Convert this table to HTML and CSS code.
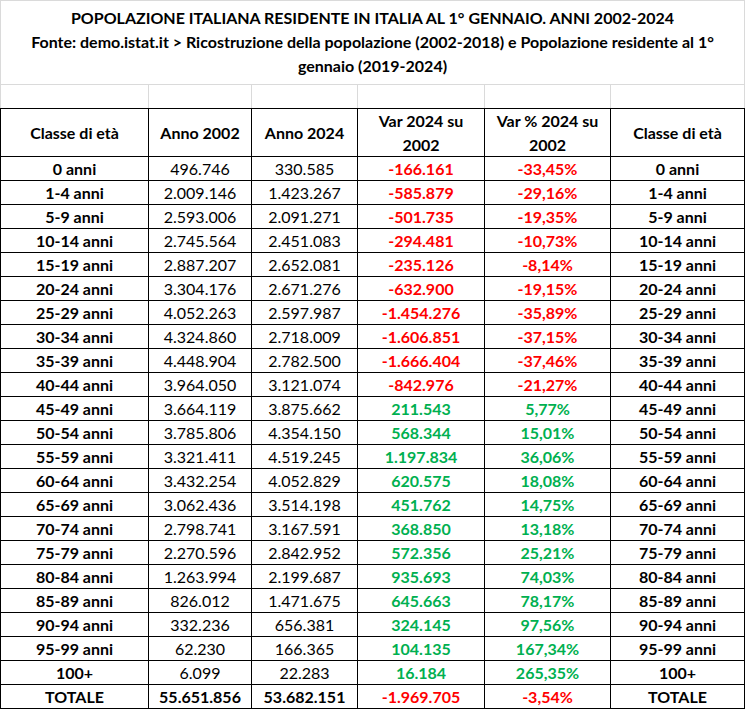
FILE: index.html
```html
<!DOCTYPE html>
<html lang="it">
<head>
<meta charset="utf-8">
<title>Popolazione italiana residente</title>
<link rel="stylesheet" href="styles.css">
</head>
<body>
<div class="sheet">
  <div class="title">
    <div class="tline">POPOLAZIONE ITALIANA RESIDENTE IN ITALIA AL 1° GENNAIO. ANNI 2002-2024</div>
    <div class="tline">Fonte: demo.istat.it &gt; Ricostruzione della popolazione (2002-2018) e Popolazione residente al 1°</div>
    <div class="tline">gennaio (2019-2024)</div>
  </div>
  <div class="spacer">
    <div></div><div></div><div></div><div></div><div></div><div></div>
  </div>
  <div class="grid">
    <div class="c hd">Classe di età</div>
    <div class="c hd">Anno 2002</div>
    <div class="c hd">Anno 2024</div>
    <div class="c hd">Var 2024 su<br>2002</div>
    <div class="c hd">Var % 2024 su<br>2002</div>
    <div class="c hd">Classe di età</div>

    <div class="c b">0 anni</div><div class="c">496.746</div><div class="c">330.585</div><div class="c b neg">-166.161</div><div class="c b neg">-33,45%</div><div class="c b">0 anni</div>
    <div class="c b">1-4 anni</div><div class="c">2.009.146</div><div class="c">1.423.267</div><div class="c b neg">-585.879</div><div class="c b neg">-29,16%</div><div class="c b">1-4 anni</div>
    <div class="c b">5-9 anni</div><div class="c">2.593.006</div><div class="c">2.091.271</div><div class="c b neg">-501.735</div><div class="c b neg">-19,35%</div><div class="c b">5-9 anni</div>
    <div class="c b">10-14 anni</div><div class="c">2.745.564</div><div class="c">2.451.083</div><div class="c b neg">-294.481</div><div class="c b neg">-10,73%</div><div class="c b">10-14 anni</div>
    <div class="c b">15-19 anni</div><div class="c">2.887.207</div><div class="c">2.652.081</div><div class="c b neg">-235.126</div><div class="c b neg">-8,14%</div><div class="c b">15-19 anni</div>
    <div class="c b">20-24 anni</div><div class="c">3.304.176</div><div class="c">2.671.276</div><div class="c b neg">-632.900</div><div class="c b neg">-19,15%</div><div class="c b">20-24 anni</div>
    <div class="c b">25-29 anni</div><div class="c">4.052.263</div><div class="c">2.597.987</div><div class="c b neg">-1.454.276</div><div class="c b neg">-35,89%</div><div class="c b">25-29 anni</div>
    <div class="c b">30-34 anni</div><div class="c">4.324.860</div><div class="c">2.718.009</div><div class="c b neg">-1.606.851</div><div class="c b neg">-37,15%</div><div class="c b">30-34 anni</div>
    <div class="c b">35-39 anni</div><div class="c">4.448.904</div><div class="c">2.782.500</div><div class="c b neg">-1.666.404</div><div class="c b neg">-37,46%</div><div class="c b">35-39 anni</div>
    <div class="c b">40-44 anni</div><div class="c">3.964.050</div><div class="c">3.121.074</div><div class="c b neg">-842.976</div><div class="c b neg">-21,27%</div><div class="c b">40-44 anni</div>
    <div class="c b">45-49 anni</div><div class="c">3.664.119</div><div class="c">3.875.662</div><div class="c b pos">211.543</div><div class="c b pos">5,77%</div><div class="c b">45-49 anni</div>
    <div class="c b">50-54 anni</div><div class="c">3.785.806</div><div class="c">4.354.150</div><div class="c b pos">568.344</div><div class="c b pos">15,01%</div><div class="c b">50-54 anni</div>
    <div class="c b">55-59 anni</div><div class="c">3.321.411</div><div class="c">4.519.245</div><div class="c b pos">1.197.834</div><div class="c b pos">36,06%</div><div class="c b">55-59 anni</div>
    <div class="c b">60-64 anni</div><div class="c">3.432.254</div><div class="c">4.052.829</div><div class="c b pos">620.575</div><div class="c b pos">18,08%</div><div class="c b">60-64 anni</div>
    <div class="c b">65-69 anni</div><div class="c">3.062.436</div><div class="c">3.514.198</div><div class="c b pos">451.762</div><div class="c b pos">14,75%</div><div class="c b">65-69 anni</div>
    <div class="c b">70-74 anni</div><div class="c">2.798.741</div><div class="c">3.167.591</div><div class="c b pos">368.850</div><div class="c b pos">13,18%</div><div class="c b">70-74 anni</div>
    <div class="c b">75-79 anni</div><div class="c">2.270.596</div><div class="c">2.842.952</div><div class="c b pos">572.356</div><div class="c b pos">25,21%</div><div class="c b">75-79 anni</div>
    <div class="c b">80-84 anni</div><div class="c">1.263.994</div><div class="c">2.199.687</div><div class="c b pos">935.693</div><div class="c b pos">74,03%</div><div class="c b">80-84 anni</div>
    <div class="c b">85-89 anni</div><div class="c">826.012</div><div class="c">1.471.675</div><div class="c b pos">645.663</div><div class="c b pos">78,17%</div><div class="c b">85-89 anni</div>
    <div class="c b">90-94 anni</div><div class="c">332.236</div><div class="c">656.381</div><div class="c b pos">324.145</div><div class="c b pos">97,56%</div><div class="c b">90-94 anni</div>
    <div class="c b">95-99 anni</div><div class="c">62.230</div><div class="c">166.365</div><div class="c b pos">104.135</div><div class="c b pos">167,34%</div><div class="c b">95-99 anni</div>
    <div class="c b">100+</div><div class="c">6.099</div><div class="c">22.283</div><div class="c b pos">16.184</div><div class="c b pos">265,35%</div><div class="c b">100+</div>
    <div class="c b">TOTALE</div><div class="c b">55.651.856</div><div class="c b">53.682.151</div><div class="c b neg">-1.969.705</div><div class="c b neg">-3,54%</div><div class="c b">TOTALE</div>
  </div>
</div>
</body>
</html>
```
FILE: styles.css
```css
html, body {
  margin: 0;
  padding: 0;
  background: #ffffff;
}
body {
  font-family: Lato, "Open Sans", "Liberation Sans", sans-serif;
  font-size: 16px;
  color: #000000;
}
.sheet {
  width: 745px;
}
.title {
  box-sizing: border-box;
  height: 85px;
  border: 1px solid #dadada;
  padding-top: 5px;
  text-align: center;
  font-weight: 700;
}
.tline {
  height: 24px;
  line-height: 24px;
  white-space: nowrap;
}
.spacer {
  display: grid;
  grid-template-columns: 147px 102px 105px 126px 125px 133px;
  column-gap: 1px;
  padding: 0 1px;
  height: 23px;
  background: #dadada;
}
.spacer div {
  background: #ffffff;
}
.grid {
  display: grid;
  grid-template-columns: 147px 102px 105px 126px 125px 133px;
  grid-template-rows: 47px;
  grid-auto-rows: 23px;
  gap: 1px;
  padding: 1px;
  background: #000000;
}
.c {
  background: #ffffff;
  display: flex;
  align-items: center;
  justify-content: center;
  text-align: center;
  line-height: 24px;
  white-space: nowrap;
}
.hd, .b {
  font-weight: 700;
}
.neg {
  color: #ff0000;
}
.pos {
  color: #00b050;
}
```
